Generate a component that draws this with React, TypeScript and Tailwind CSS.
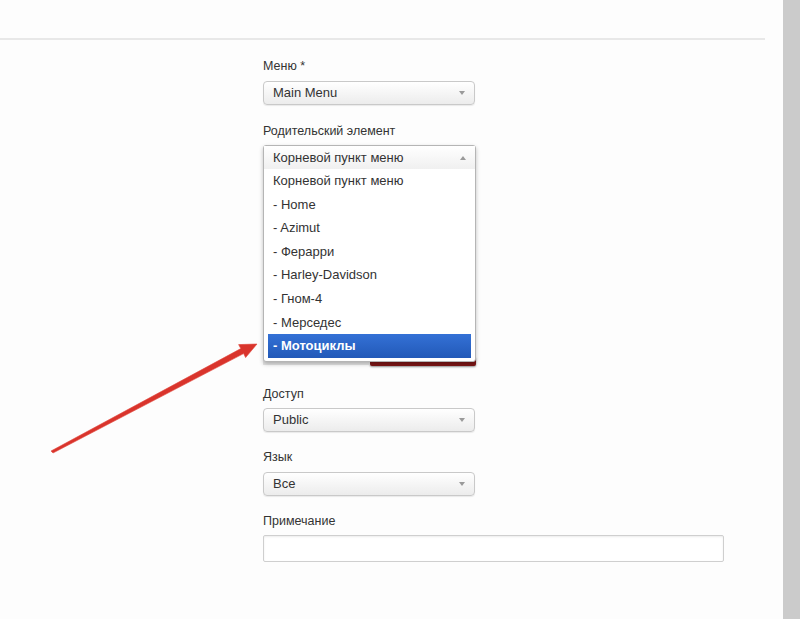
import React from "react";

const items = [
    "Корневой пункт меню",
    "- Home",
    "- Azimut",
    "- Ферарри",
    "- Harley-Davidson",
    "- Гном-4",
    "- Мерседес",
    "- Мотоциклы",
];

function Caret({ up = false }: { up?: boolean }) {
    return up ? (
        <span className="w-0 h-0 border-l-[3px] border-r-[3px] border-b-[4px] border-l-transparent border-r-transparent border-b-[#9a9a9a]" />
    ) : (
        <span className="w-0 h-0 border-l-[3px] border-r-[3px] border-t-[4px] border-l-transparent border-r-transparent border-t-[#9a9a9a]" />
    );
}

function Select({ value }: { value: string }) {
    return (
        <div className="w-[212px] h-[24px] flex items-center justify-between pl-[9px] pr-[9px] border border-[#c9c9c9] rounded-[4px] bg-gradient-to-b from-white to-[#ececec] shadow-[0_1px_1px_rgba(0,0,0,0.08)] text-[13px] text-[#333]">
            <span>{value}</span>
            <Caret />
        </div>
    );
}

function Label({ text, className = "" }: { text: string; className?: string }) {
    return <div className={`text-[12.5px] leading-[18px] text-[#333] ${className}`}>{text}</div>;
}

export default function App() {
    return (
        <div className="relative w-[800px] h-[619px] flex overflow-hidden bg-[#fdfdfd] font-['Liberation_Sans',Arial,sans-serif]">
            <div className="flex-1 flex flex-col">
                <div className="w-[765px] h-[40px] border-b-2 border-[#e8e8e8]" />
                <div className="pl-[263px] pt-[17px] flex flex-col">
                    <Label text="Меню *" />
                    <div className="mt-[6px]">
                        <Select value="Main Menu" />
                    </div>

                    <Label text="Родительский элемент" className="mt-[17px]" />
                    <div className="relative mt-[5px] w-[213px] h-[222px]">
                        {/* red button underneath the open list */}
                        <div className="absolute left-[107px] top-[212px] w-[106px] h-[9px] bg-[#7d1616] rounded-b-[2px] shadow-[0_1px_2px_rgba(0,0,0,0.4)]" />
                        <div className="absolute left-0 top-[212px] w-[107px] h-[8px] bg-[#e6e6e6]" />
                        <div className="relative w-[213px] h-[217px] border border-[#b5b5b5] rounded-[3px] bg-white shadow-[0_2px_4px_rgba(0,0,0,0.25)] flex flex-col">
                            <div className="h-[23px] flex items-center justify-between pl-[9px] pr-[9px] bg-gradient-to-b from-white to-[#f0f0f0] text-[13px] text-[#333]">
                                <span>Корневой пункт меню</span>
                                <Caret up />
                            </div>
                            <div className="flex flex-col px-[4px]">
                                {items.map((it, i) => (
                                    <div
                                        key={i}
                                        className={`h-[23.6px] flex items-center pl-[5px] text-[13px] ${
                                            i === items.length - 1
                                                ? "bg-gradient-to-b from-[#3471d6] to-[#2259b8] text-white font-bold"
                                                : "text-[#333]"
                                        }`}
                                    >
                                        {it}
                                    </div>
                                ))}
                            </div>
                        </div>
                    </div>

                    <Label text="Доступ" className="mt-[18px]" />
                    <div className="mt-[5px]">
                        <Select value="Public" />
                    </div>

                    <Label text="Язык" className="mt-[16px]" />
                    <div className="mt-[6px]">
                        <Select value="Все" />
                    </div>

                    <Label text="Примечание" className="mt-[16px]" />
                    <div className="mt-[5px] w-[461px] h-[27px] border border-[#cfcfcf] rounded-[2px] bg-white shadow-[inset_0_1px_2px_rgba(0,0,0,0.08)]" />
                </div>
            </div>
            <div className="w-[17px] h-full bg-[#cbcbcb]" />

            <svg className="absolute left-0 top-0 pointer-events-none" width="800" height="619" viewBox="0 0 800 619">
                <polygon
                    points="51,451 53,453 243.6,353.6 245.6,357.6 257,344 238.6,344.6 240.8,348.6"
                    fill="#d9342c"
                    stroke="#e0463c"
                    strokeWidth="0.6"
                    strokeLinejoin="round"
                />
            </svg>
        </div>
    );
}
